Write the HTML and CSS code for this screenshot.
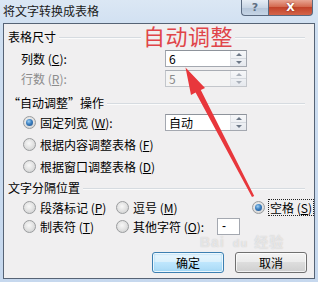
FILE: index.html
```html
<!DOCTYPE html>
<html lang="zh-CN">
<head>
<meta charset="utf-8">
<title>将文字转换成表格</title>
<link rel="stylesheet" href="styles.css">
</head>
<body>
<div class="window">
  <div class="titlebar">
    <span class="title">将文字转换成表格</span>
    <div class="caption-btns">
      <span class="cap-help">?</span>
      <span class="cap-close">X</span>
    </div>
  </div>
  <div class="client">
    <div class="group-hdr hdr-size"><span class="hdr-text">表格尺寸</span><i class="hdr-line"></i></div>
    <div class="field row-cols">
      <span class="field-label">列数 (<u>C</u>):</span>
      <div class="spin"><span class="spin-val">6</span><span class="spin-btns"><i class="up"></i><i class="down"></i></span></div>
    </div>
    <div class="field row-rows disabled">
      <span class="field-label">行数 (<u>R</u>):</span>
      <div class="spin spin-disabled"><span class="spin-val">5</span><span class="spin-btns"><i class="up"></i><i class="down"></i></span></div>
    </div>
    <div class="group-hdr hdr-auto"><span class="hdr-text">“自动调整”操作</span><i class="hdr-line"></i></div>
    <div class="radio-row row-fixed">
      <span class="opt opt-fixed"><i class="radio checked"></i><span>固定列宽 (<u>W</u>):</span></span>
      <div class="spin"><span class="spin-val">自动</span><span class="spin-btns"><i class="up"></i><i class="down"></i></span></div>
    </div>
    <div class="radio-row row-content">
      <span class="opt"><i class="radio"></i><span>根据内容调整表格 (<u>F</u>)</span></span>
    </div>
    <div class="radio-row row-window">
      <span class="opt"><i class="radio"></i><span>根据窗口调整表格 (<u>D</u>)</span></span>
    </div>
    <div class="group-hdr hdr-sep"><span class="hdr-text">文字分隔位置</span><i class="hdr-line"></i></div>
    <div class="sep-grid sep-row1">
      <span class="opt"><i class="radio"></i><span>段落标记 (<u>P</u>)</span></span>
      <span class="opt"><i class="radio"></i><span>逗号 (<u>M</u>)</span></span>
      <span class="opt"><i class="radio checked"></i><span class="focus">空格 (<u>S</u>)</span></span>
    </div>
    <div class="sep-grid sep-row2">
      <span class="opt"><i class="radio"></i><span>制表符 (<u>T</u>)</span></span>
      <span class="opt opt-other"><i class="radio"></i><span>其他字符 (<u>O</u>):</span><span class="other-box">-</span></span>
    </div>
    <div class="buttons">
      <span class="btn btn-default">确定</span>
      <span class="btn">取消</span>
    </div>
    <span class="annot">自动调整</span>
    <span class="watermark">Bai<span class="wm-du">du</span>经验</span>
  </div>
  <svg class="arrow" width="318" height="282" viewBox="0 0 318 282">
    <polygon points="185.5,67.5 205,88 200.8,90 254.2,196 252,197 195.6,92.6 191,95" fill="#e8373c"/>
  </svg>
</div>
</body>
</html>
```

FILE: styles.css
```css
html, body {
  margin: 0;
  padding: 0;
}
body {
  width: 318px;
  height: 282px;
  overflow: hidden;
  background: #c8d9ee;
  font-family: "Noto Sans CJK SC", "Noto Sans", sans-serif;
  font-size: 12px;
  color: #000;
}
.window {
  position: relative;
  width: 318px;
  height: 282px;
  display: flex;
  flex-direction: column;
  background: linear-gradient(#dbe7f4, #cfdff1 30px, #c6d8ee);
}
.titlebar {
  height: 23px;
  display: flex;
  align-items: flex-start;
  padding-left: 3px;
  padding-right: 5px;
}
.title {
  align-self: center;
  font-size: 12px;
  line-height: 16px;
  color: #1a1a1a;
  margin-top: -2px;
  flex: 1;
}
.caption-btns {
  display: flex;
  height: 16px;
}
.cap-help, .cap-close {
  height: 16px;
  box-sizing: border-box;
  display: flex;
  align-items: center;
  justify-content: center;
  font-family: "DejaVu Sans", sans-serif;
  font-weight: bold;
  font-size: 11px;
  border: 1px solid #5a6a80;
  border-top: none;
}
.cap-help {
  width: 27px;
  border-radius: 0 0 0 4px;
  background: linear-gradient(#e6edf5, #c9d6e5 50%, #b4c5d9 51%, #c6d5e6);
  color: #5f6f83;
  border-right: none;
}
.cap-close {
  width: 45px;
  border-radius: 0 0 4px 0;
  background: linear-gradient(#e8a593, #d46a50 45%, #c2432a 50%, #d4654a);
  color: #fff;
  text-shadow: 0 0 2px #7a2010;
}
.client {
  position: relative;
  margin: 0 3px;
  height: 256px;
  box-sizing: border-box;
  border: 1px solid #566375;
  background: #f0eff0;
  display: flex;
  flex-direction: column;
  padding: 0 9px 0 4px;
}
.group-hdr {
  display: flex;
  align-items: center;
  height: 18px;
  margin-top: 4px;
}
.hdr-text {
  white-space: nowrap;
  line-height: 18px;
}
.hdr-line {
  flex: 1;
  height: 0;
  border-top: 1px solid #d6dbe0;
  border-bottom: 1px solid #fbfbfb;
  margin-left: 3px;
  margin-top: 1px;
}
.hdr-auto { margin-top: 7px; }
.hdr-sep { margin-top: 4px; }

.field {
  display: flex;
  align-items: center;
  height: 17px;
  padding-left: 13px;
}
.row-cols { margin-top: 4px; }
.row-rows { margin-top: 3px; }
.field-label {
  width: 144px;
  white-space: nowrap;
}
.disabled .field-label { color: #8c8c8c; }

.spin {
  width: 82px;
  height: 17px;
  box-sizing: border-box;
  border: 1px solid #a4a8b0;
  border-top-color: #8e939b;
  background: #fff;
  display: flex;
}
.spin-val {
  flex: 1;
  padding-left: 3px;
  line-height: 15px;
  font-family: "Noto Sans CJK SC", "Liberation Sans", sans-serif;
}
.spin-disabled {
  background: #f4f4f4;
  border-color: #c3c6cb;
  border-top-color: #a9adb4;
}
.spin-disabled .spin-val { color: #8a8a8a; }
.spin-btns {
  width: 15px;
  display: flex;
  flex-direction: column;
  border-left: 1px solid #e0e2e6;
  background: linear-gradient(#f6f7f9, #e6e9ee);
}
.spin-btns i {
  flex: 1;
  display: flex;
  align-items: center;
  justify-content: center;
}
.spin-btns i.up { border-bottom: 1px solid #d5d9df; }
.spin-btns i::after {
  content: "";
  width: 0;
  height: 0;
  border-left: 3px solid transparent;
  border-right: 3px solid transparent;
}
.spin-btns i.up::after { border-bottom: 3px solid #6d7887; }
.spin-btns i.down::after { border-top: 3px solid #6d7887; }
.spin-disabled .spin-btns i.up::after { border-bottom-color: #a9b0ba; }
.spin-disabled .spin-btns i.down::after { border-top-color: #a9b0ba; }

.radio-row {
  display: flex;
  align-items: center;
  height: 18px;
  padding-left: 15px;
  margin-top: 4px;
}
.row-fixed { height: 17px; margin-top: 2px; }
.opt {
  display: flex;
  align-items: center;
  white-space: nowrap;
}
.opt-fixed { width: 142px; }
.radio {
  width: 13px;
  height: 13px;
  box-sizing: border-box;
  border-radius: 50%;
  border: 1px solid #9a9c9e;
  background: radial-gradient(circle at 45% 40%, #f8f8f8 0, #e4e4e4 45%, #c9cacb 100%);
  margin-right: 4px;
  display: flex;
  align-items: center;
  justify-content: center;
  flex: none;
}
.radio.checked::after {
  content: "";
  width: 7px;
  height: 7px;
  border-radius: 50%;
  background: radial-gradient(circle at 40% 35%, #9fd0f4 0, #3b7fc0 45%, #1d4a82 100%);
}
.sep-grid {
  display: grid;
  grid-template-columns: 93px 136px 1fr;
  align-items: center;
  padding-left: 15px;
  height: 18px;
}
.sep-row1 { margin-top: 1px; }
.sep-row2 { margin-top: 2px; height: 17px; }
.opt-other { grid-column: 2 / 4; }
.focus {
  outline: 1px dotted #222;
  outline-offset: 0;
  padding: 0 1px;
  line-height: 15px;
}
.other-box {
  width: 23px;
  height: 17px;
  box-sizing: border-box;
  border: 1px solid #a4a8b0;
  background: #fff;
  margin-left: 13px;
  padding-left: 4px;
  line-height: 14px;
  font-family: "Liberation Sans", sans-serif;
}
.buttons {
  display: flex;
  justify-content: flex-end;
  gap: 11px;
  margin-top: 17px;
  margin-right: -2px;
}
.btn {
  width: 72px;
  height: 21px;
  box-sizing: border-box;
  border: 1px solid #707070;
  border-radius: 3px;
  background: linear-gradient(#f3f3f3 0, #ebebeb 48%, #dddddd 50%, #cfcfcf 100%);
  display: flex;
  align-items: center;
  justify-content: center;
  box-shadow: inset 0 0 0 1px rgba(255,255,255,0.7);
}
.btn-default {
  border-color: #3c7fb1;
  background: linear-gradient(#eaf6fd 0, #d9f0fc 48%, #bee6fd 50%, #a7d9f5 100%);
  box-shadow: inset 0 0 0 1px rgba(255,255,255,0.8), inset 0 0 2px 1px #8fcdf0;
}
.annot {
  position: absolute;
  left: 137px;
  top: 0;
  font-size: 22px;
  line-height: 23px;
  color: #e04549;
  background: #f0eff0;
  padding: 0 2px;
  letter-spacing: 0.5px;
}
.watermark {
  position: absolute;
  left: 196px;
  top: 211px;
  font-family: "Liberation Sans", "Noto Sans CJK SC", sans-serif;
  font-size: 14px;
  line-height: 14px;
  font-weight: bold;
  color: rgba(255,255,255,0.55);
  text-shadow: 0 0 1px rgba(140,140,140,0.45);
  letter-spacing: 1px;
  pointer-events: none;
}
.wm-du {
  font-size: 11px;
  margin: 0 6px 0 8px;
}
.arrow {
  position: absolute;
  left: 0;
  top: 0;
  pointer-events: none;
}
```
